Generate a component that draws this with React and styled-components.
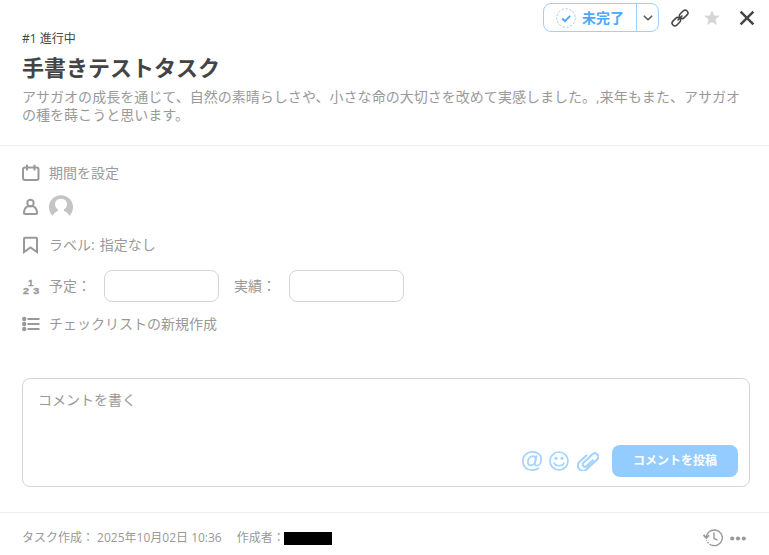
import React from 'react';
import styled, { createGlobalStyle } from 'styled-components';

const GlobalStyle = createGlobalStyle`
  * {
    box-sizing: border-box;
  }
  body {
    margin: 0;
    background: #fff;
    color: #999;
    font-family: 'Open Sans', 'Noto Sans CJK JP', sans-serif;
    font-size: 14px;
    overflow: hidden;
  }
  svg {
    display: block;
    flex: none;
  }
`;

const Panel = styled.main`
  display: flex;
  flex-direction: column;
  width: 769px;
  height: 555px;
`;

const Toolbar = styled.div`
  display: flex;
  justify-content: flex-end;
  align-items: center;
  height: 32px;
  padding: 3px 13px 0 0;
`;

const StatusGroup = styled.div`
  display: flex;
  width: 116px;
  height: 29px;
  margin-right: 12px;
  border: 1px solid #9dcfff;
  border-radius: 8px;
`;

const StatusButton = styled.button`
  display: flex;
  align-items: center;
  gap: 6px;
  flex: 1;
  padding: 0 0 0 12px;
  border: 0;
  background: none;
  color: #4da6ff;
  font: bold 14px/20px 'Open Sans', 'Noto Sans CJK JP', sans-serif;
  white-space: nowrap;
`;

const StatusArrow = styled.button`
  display: flex;
  align-items: center;
  justify-content: center;
  width: 22px;
  padding: 0;
  border: 0;
  border-left: 1px solid #9dcfff;
  background: none;
`;

const IconButton = styled.button`
  padding: 0;
  margin-left: ${(props) => props.$gap || 0}px;
  border: 0;
  background: none;
`;

const Heading = styled.header`
  height: 114px;
  padding: 0 22px;
  border-bottom: 1px solid #eee;
`;

const Stage = styled.div`
  height: 19px;
  color: #444;
  font-size: 12px;
  line-height: 14px;
`;

const Title = styled.h1`
  margin: 0;
  color: #444;
  font-size: 22px;
  font-weight: bold;
  line-height: 32px;
`;

const Description = styled.p`
  width: 725px;
  margin: 5px 0 0;
  letter-spacing: 0.03px;
  line-height: 18px;
`;

const Fields = styled.section`
  padding: 10px 22px 0;
`;

const Row = styled.div`
  display: flex;
  align-items: center;
  height: ${(props) => props.$height}px;
  line-height: 20px;
  word-spacing: 1.5px;
`;

const RowIcon = styled.span`
  width: 27px;
  flex: none;
`;

const NumberLabel = styled.label`
  display: flex;
  align-items: center;
  width: ${(props) => props.$width}px;
`;

const NumberInput = styled.input`
  width: 115px;
  height: 32px;
  margin: 0 15px 0 0;
  border: 1px solid #d5d5d5;
  border-radius: 8px;
  background: #fff;
  outline: none;
`;

const CommentBox = styled.section`
  display: flex;
  flex-direction: column;
  justify-content: space-between;
  height: 109px;
  margin: 37px 19px 0 22px;
  padding: 11px 11px 9px 15px;
  border: 1px solid #d5d5d5;
  border-radius: 8px;
  line-height: 20px;
`;

const CommentActions = styled.div`
  display: flex;
  justify-content: flex-end;
  align-items: center;
`;

const SubmitButton = styled.button`
  width: 126px;
  height: 32px;
  margin-left: 13px;
  padding: 0;
  border: 0;
  border-radius: 8px;
  background: #94ccff;
  color: #fff;
  font: bold 12px/18px 'Open Sans', 'Noto Sans CJK JP', sans-serif;
`;

const Footer = styled.footer`
  display: flex;
  align-items: center;
  height: 43px;
  margin-top: 25px;
  padding: 7px 23px 0 22px;
  border-top: 1px solid #eee;
  font-size: 12px;
  line-height: 18px;
`;

const Author = styled.span`
  display: flex;
  align-items: center;
  width: 95px;
  margin-left: 15px;
`;

const Redacted = styled.span`
  width: 48px;
  height: 13px;
  margin-left: -1px;
  margin-top: 1px;
  background: #000;
`;

const FooterIcons = styled.div`
  display: flex;
  align-items: center;
  gap: 7px;
  margin-left: auto;
`;

const StatusIcon = () => (
  <svg width="20" height="20" viewBox="0 0 20 20" fill="none">
    <circle cx="10" cy="10" r="9.3" stroke="#9dcfff" strokeWidth="1" strokeDasharray="2.4 1.5" />
    <path d="M6.2 10.5l2.8 2.7 5.200-5.400" stroke="#4da6ff" strokeWidth="1.9" />
  </svg>
);

const ChevronIcon = () => (
  <svg width="10" height="6" viewBox="0 0 10 6" fill="none" stroke="#555" strokeWidth="1.5">
    <path d="M.8.8L5 4.8 9.2.8" />
  </svg>
);

const LinkIcon = () => (
  <svg width="18" height="18" viewBox="0 0 18 18" fill="none" stroke="#444" strokeWidth="1.5">
    <g transform="rotate(-45 9 9)">
      <rect x="-1" y="6.200" width="9.500" height="5.600" rx="2.800" />
      <rect x="9.500" y="6.200" width="9.500" height="5.600" rx="2.800" />
      <path d="M5.500 9h7" />
    </g>
  </svg>
);

const StarIcon = () => (
  <svg width="16" height="16" viewBox="0 0 16 16" fill="#d5d5d5">
    <path d="M8 .2l2.100 5.300 5.700.3-4.400 3.600 1.500 5.700L8 12l-4.900 3.100 1.500-5.700L.2 5.800l5.700-.3z" />
  </svg>
);

const CloseIcon = () => (
  <svg width="18" height="18" viewBox="0 0 18 18" stroke="#444" strokeWidth="2.5">
    <path d="M2.600 2.600l12.800 12.800M15.400 2.600L2.600 15.400" />
  </svg>
);

const CalendarIcon = () => (
  <svg width="18" height="18" viewBox="0 0 18 18" fill="none" stroke="#999" strokeWidth="2">
    <rect x="1" y="3.500" width="15.500" height="12.500" rx="2" />
    <path d="M5 .800v5.700M12.500.800v5.700" strokeWidth="2" />
  </svg>
);

const PersonIcon = () => (
  <svg width="18" height="18" viewBox="0 0 18 18" fill="none" stroke="#999" strokeWidth="2">
    <circle cx="8.500" cy="5" r="3.200" />
    <path d="M6 8.200C3.300 9.500 2 12 2 15.200c0 .6.3.8.800.8h11.400c.5 0 .8-.2.800-.8 0-3.200-1.300-5.700-4-7z" />
  </svg>
);

const AvatarIcon = () => (
  <svg width="24" height="24" viewBox="0 0 24 24">
    <path
      fill="#c4c4c4"
      d="M3.800 21A12 12 0 1 1 20.200 21C19.500 18.500 17.500 17 15 16V14.300C17 13.400 18 11.400 18 9.200 18 6 15.500 3.800 12 3.800S6 6 6 9.200C6 11.400 7 13.400 9 14.300V16C6.500 17 4.500 18.500 3.800 21z"
    />
  </svg>
);

const BookmarkIcon = () => (
  <svg width="18" height="18" viewBox="0 0 18 18" fill="none" stroke="#999" strokeWidth="2">
    <path d="M2 2.800c0-.7.300-1 1-1h11c.7 0 1 .3 1 1v13.200l-6.500-4.500L2 16z" />
  </svg>
);

const NumbersIcon = () => (
  <svg
    width="18"
    height="18"
    viewBox="0 0 18 18"
    fill="#999"
    stroke="#999"
    strokeWidth="0.3"
    fontFamily="Liberation Sans, sans-serif"
    fontSize="9.5"
    fontWeight="bold"
  >
    <text x="6" y="8.500">1</text>
    <text x="1" y="17" textLength="6" lengthAdjust="spacingAndGlyphs">2</text>
    <text x="11.200" y="17" textLength="6" lengthAdjust="spacingAndGlyphs">3</text>
  </svg>
);

const ListIcon = () => (
  <svg width="18" height="18" viewBox="0 0 18 18" fill="#999">
    <circle cx="2.200" cy="4" r="2.200" />
    <circle cx="2.200" cy="9" r="2.200" />
    <circle cx="2.200" cy="14" r="2.200" />
    <path d="M5.500 3h12v2h-12zM5.500 8h12v2h-12zM5.500 13h12v2h-12z" />
  </svg>
);

const MentionIcon = () => (
  <svg width="20" height="20" viewBox="0 0 20 20" fill="none" stroke="#a3d3ff" strokeWidth="1.700" strokeLinecap="round">
    <path d="M16.500 17.200c-1.700 1.300-4 1.900-6.600 1.900C4.300 19.100.8 15.300.8 10.200.8 4.800 4.900.8 10.600.8c5.200 0 8.600 3.200 8.600 7.700 0 3.700-2 6.200-4.500 6.200-1.500 0-2.200-1-1.800-2.700l1.600-6.800" />
    <path d="M13.700 8.500c0-2-1.100-3.300-2.900-3.300-2.800 0-4.900 2.700-4.900 5.700 0 2.200 1 3.500 2.800 3.500 2.600 0 4.600-2.700 5-5.900z" />
  </svg>
);

const SmileIcon = () => (
  <svg width="20" height="20" viewBox="0 0 20 20" fill="none" stroke="#a3d3ff" strokeWidth="1.700">
    <circle cx="10" cy="10" r="9" />
    <path d="M5 11.500c1.200 4.300 8.800 4.300 10 0" />
    <circle cx="7" cy="7.300" r="1.500" fill="#a3d3ff" stroke="none" />
    <circle cx="13" cy="7.300" r="1.500" fill="#a3d3ff" stroke="none" />
  </svg>
);

const ClipIcon = () => (
  <svg width="22" height="20" viewBox="0 0 22 20" fill="none" stroke="#a3d3ff" strokeWidth="2.100" strokeLinecap="round">
    <g transform="rotate(-43 11 10)">
      <path d="M15 12.800H6.500c-3 0-3-4.700 0-4.700H18.500c5 0 5 7 0 7H4c-6.500 0-6.500-10.200 0-10.200h9.500" />
    </g>
  </svg>
);

const HistoryIcon = () => (
  <svg width="20" height="18" viewBox="0 0 20 18" fill="none" stroke="#999" strokeWidth="1.400">
    <path d="M3.300 8.500A8 7.800 0 1 1 8.300 16" />
    <path d="M8 16a8 8 0 0 1-4.500-5" strokeDasharray="1.500 1.500" />
    <path d="M.5 6l2.800 2.900L6 6.300" strokeWidth="1.900" />
    <path d="M11 3.500v6l3.500 1.700" />
  </svg>
);

const MoreIcon = () => (
  <svg width="16" height="6" viewBox="0 0 16 6" fill="#999">
    <circle cx="2.200" cy="3.500" r="2.100" />
    <circle cx="8" cy="3.500" r="2.100" />
    <circle cx="13.800" cy="3.500" r="2.100" />
  </svg>
);

export default function App() {
  return (
    <Panel>
      <GlobalStyle />
      <Toolbar>
        <StatusGroup>
          <StatusButton>
            <StatusIcon />
            未完了
          </StatusButton>
          <StatusArrow aria-label="ステータス"><ChevronIcon /></StatusArrow>
        </StatusGroup>
        <IconButton><LinkIcon /></IconButton>
        <IconButton $gap={15}><StarIcon /></IconButton>
        <IconButton $gap={18}><CloseIcon /></IconButton>
      </Toolbar>

      <Heading>
        <Stage>#1 進行中</Stage>
        <Title>手書きテストタスク</Title>
        <Description>
          アサガオの成長を通じて、自然の素晴らしさや、小さな命の大切さを改めて実感しました。,来年もまた、アサガオの種を蒔こうと思います。
        </Description>
      </Heading>

      <Fields>
        <Row $height={34}>
          <RowIcon><CalendarIcon /></RowIcon>
          期間を設定
        </Row>
        <Row $height={34}>
          <RowIcon><PersonIcon /></RowIcon>
          <AvatarIcon />
        </Row>
        <Row $height={42}>
          <RowIcon><BookmarkIcon /></RowIcon>
          ラベル: 指定なし
        </Row>
        <Row $height={40}>
          <RowIcon><NumbersIcon /></RowIcon>
          <NumberLabel $width={55}>予定：</NumberLabel>
          <NumberInput />
          <NumberLabel $width={55}>実績：</NumberLabel>
          <NumberInput />
        </Row>
        <Row $height={35}>
          <RowIcon><ListIcon /></RowIcon>
          チェックリストの新規作成
        </Row>
      </Fields>

      <CommentBox>
        <div>コメントを書く</div>
        <CommentActions>
          <IconButton><MentionIcon /></IconButton>
          <IconButton $gap={7}><SmileIcon /></IconButton>
          <IconButton $gap={8}><ClipIcon /></IconButton>
          <SubmitButton>コメントを投稿</SubmitButton>
        </CommentActions>
      </CommentBox>

      <Footer>
        <span>タスク作成： 2025年10月02日 10:36</span>
        <Author>
          作成者：
          <Redacted />
        </Author>
        <FooterIcons>
          <HistoryIcon />
          <MoreIcon />
        </FooterIcons>
      </Footer>
    </Panel>
  );
}
